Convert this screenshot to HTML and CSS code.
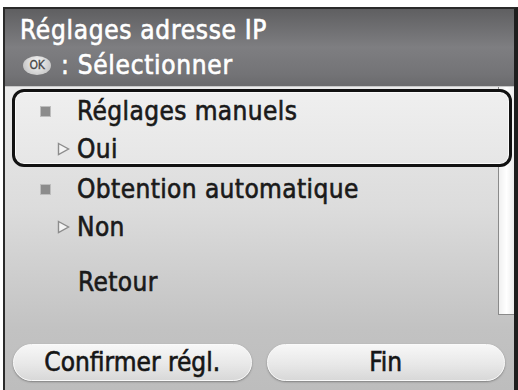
FILE: index.html
```html
<!DOCTYPE html>
<html lang="fr">
<head>
<meta charset="utf-8">
<link rel="stylesheet" href="styles.css">
</head>
<body>
<div class="screen">
  <div class="header">
    <div class="title">Réglages adresse IP</div>
    <div class="hint"><span class="ok">OK</span><span> : Sélectionner</span></div>
  </div>
  <div class="content">
    <div class="main">
      <div class="list">
        <div class="item selected">
          <div class="row"><span class="bullet"></span><span class="label">Réglages manuels</span></div>
          <div class="row sub"><svg class="tri" width="13" height="14" viewBox="0 0 13 14"><polygon points="1.5,1.5 11.5,7 1.5,12.5" fill="#f4f4f4" stroke="#8c8c8c" stroke-width="1.4"/></svg><span class="label">Oui</span></div>
        </div>
        <div class="item">
          <div class="row"><span class="bullet"></span><span class="label">Obtention automatique</span></div>
          <div class="row sub"><svg class="tri" width="13" height="14" viewBox="0 0 13 14"><polygon points="1.5,1.5 11.5,7 1.5,12.5" fill="#f4f4f4" stroke="#8c8c8c" stroke-width="1.4"/></svg><span class="label">Non</span></div>
        </div>
        <div class="item back">
          <div class="row"><span class="label">Retour</span></div>
        </div>
      </div>
      <div class="scrollbar"></div>
    </div>
    <div class="buttons">
      <div class="btn">Confirmer régl.</div>
      <div class="btn">Fin</div>
    </div>
  </div>
</div>
</body>
</html>
```
FILE: styles.css
```css
html, body {
  margin: 0;
  padding: 0;
  background: #ffffff;
}
body {
  width: 518px;
  height: 390px;
  overflow: hidden;
  font-family: "DejaVu Sans Condensed", "DejaVu Sans", sans-serif;
  -webkit-text-stroke: 0.6px currentColor;
}
.screen {
  margin: 7px 0 0 3px;
  width: 509px;
  height: 381px;
  border-top: 2px solid #2a2a2a;
  border-left: 2px solid #2a2a2a;
  border-right: 4px solid #1e1e1e;
  display: flex;
  flex-direction: column;
}
.header {
  height: 78px;
  box-sizing: border-box;
  padding: 4px 0 0 15px;
  background: linear-gradient(#5f5f61, #7e7e81 50%, #737376 85%, #6a6a6c);
  border-bottom: 1px solid #c8c8c8;
  color: #ffffff;
  font-size: 26px;
  letter-spacing: 0.7px;
  line-height: 34px;
}
.hint {
  display: flex;
  align-items: center;
  line-height: 36px;
}
.ok {
  width: 28px;
  height: 19px;
  border-radius: 50%;
  background: radial-gradient(circle at 50% 35%, #f8f8f8, #cacaca 72%, #a0a0a0);
  color: #484848;
  -webkit-text-stroke: 0.3px #484848;
  font-size: 12px;
  line-height: 19px;
  text-align: center;
  margin: 1px 10px 0 3px;
  letter-spacing: -0.3px;
}
.content {
  flex: 1;
  background: linear-gradient(#ebebeb, #dcdcdc 40%, #c2c2c2 80%, #bdbdbd);
  display: flex;
  flex-direction: column;
}
.main {
  display: flex;
  height: 228px;
}
.list {
  flex: 1;
  padding: 2px 0 0 7px;
}
.scrollbar {
  width: 15px;
  height: 227px;
  background: linear-gradient(90deg, #f0f0f0, #ffffff 50%, #ececec);
  border-left: 1px solid #8a8a8a;
  border-bottom: 1px solid #8a8a8a;
}
.item {
  height: 78px;
  box-sizing: border-box;
  border: 3px solid transparent;
  border-radius: 12px;
  padding: 4px 0 0 0;
  color: #1a1a1a;
  font-size: 26px;
  letter-spacing: 0.4px;
  margin-right: -14px;
  position: relative;
  display: flex;
  flex-direction: column;
  gap: 8px;
}
.item.selected {
  border-color: #121212;
  background: linear-gradient(#efefef, #e6e6e6);
  box-shadow: inset 0 0 0 1px #fafafa;
}
.row {
  display: flex;
  align-items: center;
  height: 30px;
  line-height: 30px;
}
.bullet {
  width: 9px;
  height: 9px;
  background: #8c8c8c;
  border: 1px solid #bdbdbd;
  margin: 0 26px 0 25px;
}
.tri {
  margin: 0 7px 0 42px;
}
.back {
  padding-top: 19px;
}
.back .label {
  margin-left: 63px;
}
.buttons {
  display: flex;
  gap: 15px;
  padding: 29px 9px 0 8px;
}
.btn {
  flex: 1;
  height: 37px;
  box-sizing: border-box;
  border-radius: 19px;
  background: linear-gradient(#f7f7f7, #e8e8e8 55%, #d8d8d8);
  border: 1px solid #fafafa;
  box-shadow: 0 1px 2px #7e7e7e;
  color: #161616;
  font-size: 26px;
  line-height: 35px;
  text-align: center;
}
```
